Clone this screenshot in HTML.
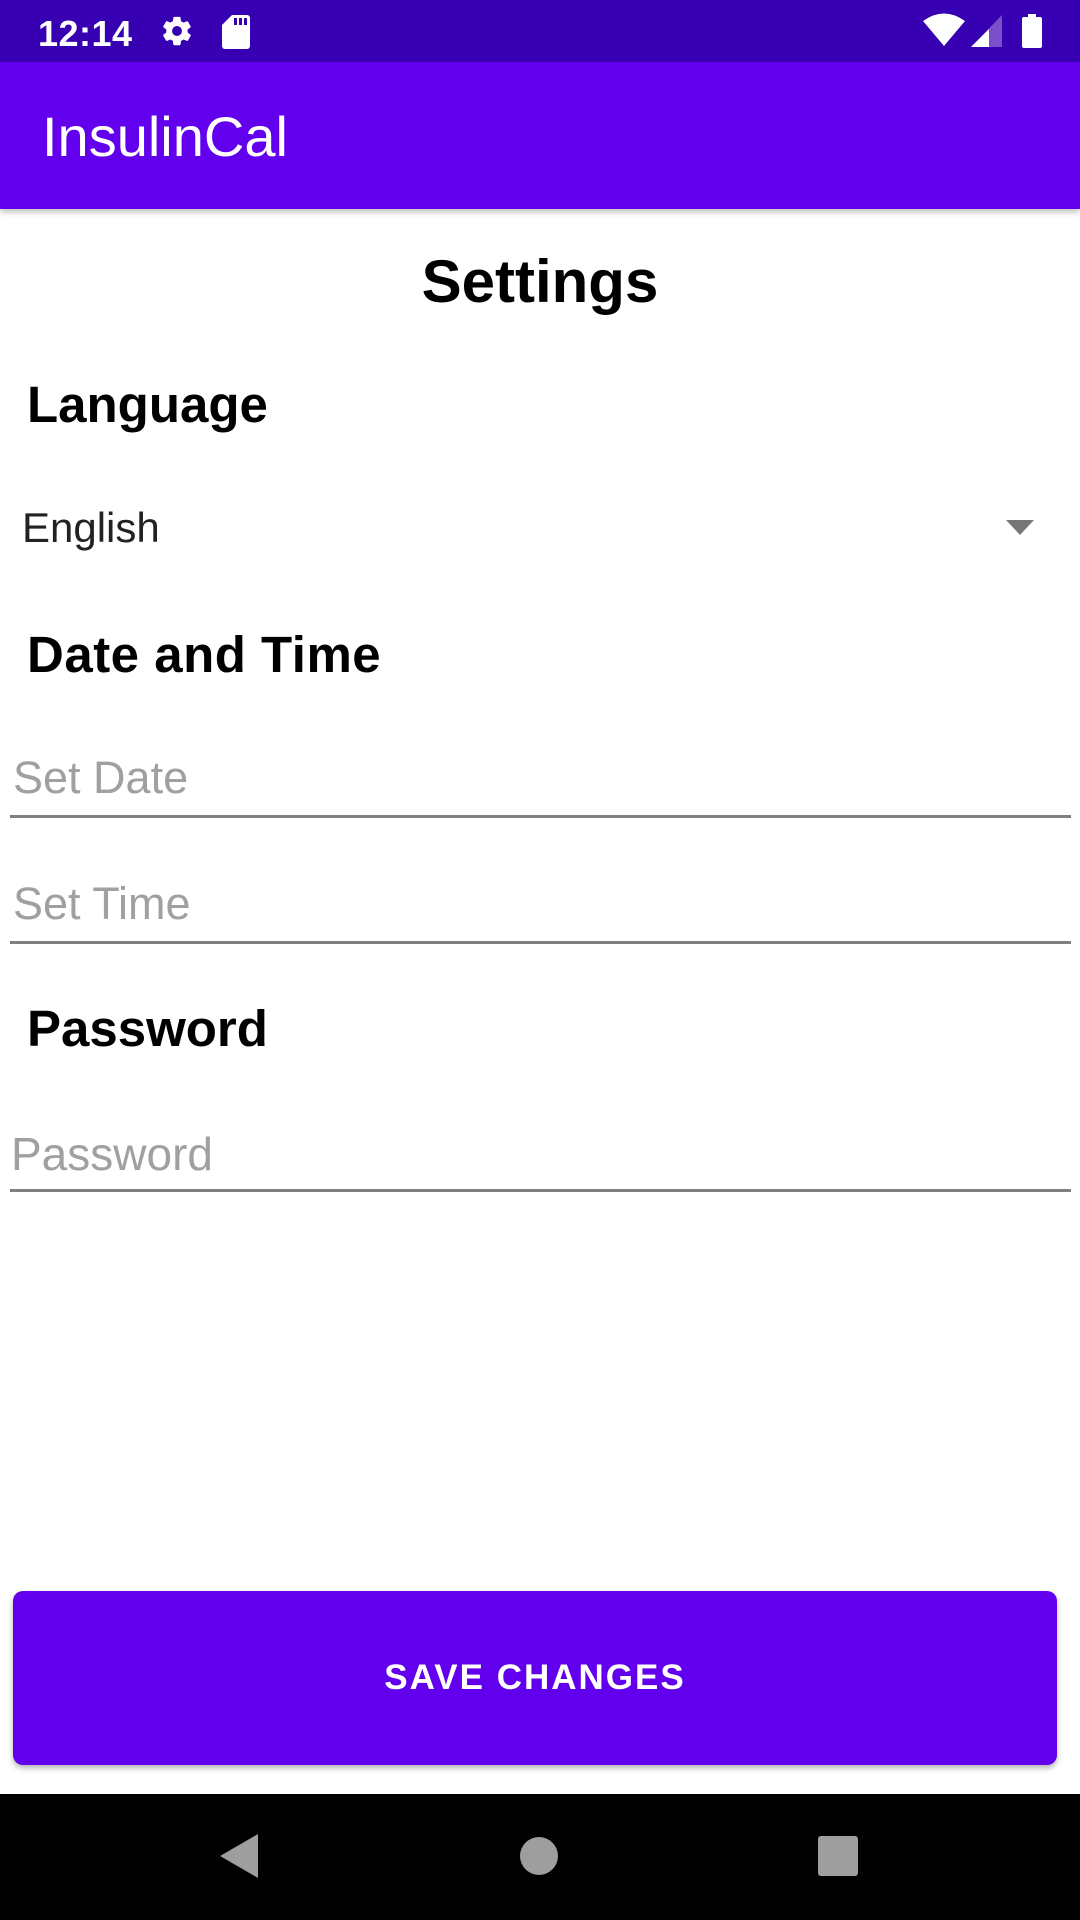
<!DOCTYPE html>
<html><head><meta charset="utf-8"><style>
*{margin:0;padding:0;box-sizing:border-box}
body{width:1080px;height:1920px;position:relative;background:#fff;font-family:"Liberation Sans",Roboto,sans-serif;overflow:hidden}
.abs{position:absolute;white-space:nowrap}
.h{font-weight:bold;font-size:51px;color:#000;left:27px}
.ph{font-size:45px;color:#a0a0a0}
.line{position:absolute;left:10px;width:1061px;height:3px;background:#808080}
</style></head><body>
<div class="abs" style="left:0;top:0;width:1080px;height:62px;background:#3700B3"></div>
<div class="abs" style="left:38px;top:13px;font-size:36px;color:#fff;font-weight:bold;letter-spacing:0.5px">12:14</div>
<svg class="abs" style="left:160px;top:14px" width="34" height="34" viewBox="0 0 24 24"><path fill="#fff" d="M19.4 13c.04-.3.1-.7.1-1s-.03-.7-.07-1l2.1-1.6c.2-.15.24-.42.12-.64l-2-3.46c-.12-.22-.4-.3-.6-.22l-2.5 1c-.5-.4-1.1-.7-1.7-1l-.4-2.65A.5.5 0 0 0 14 2h-4a.5.5 0 0 0-.5.42l-.4 2.650c-.6.25-1.2.58-1.7.98l-2.5-1c-.22-.08-.48 0-.6.22l-2 3.46c-.13.22-.07.5.12.64L4.5 11c-.04.3-.07.7-.07 1s.03.7.07 1l-2.1 1.650c-.2.15-.25.42-.13.64l2 3.460c.12.22.4.3.6.22l2.5-1c.5.4 1.1.7 1.7 1l.4 2.65c.03.24.24.42.5.42h4c.25 0 .46-.18.5-.42l.4-2.65c.6-.25 1.2-.58 1.7-.98l2.5 1c.22.08.48 0 .6-.22l2-3.46c.12-.22.07-.5-.12-.64L19.4 13zM12 15.5a3.5 3.5 0 1 1 0-7 3.5 3.5 0 0 1 0 7z"/></svg>
<svg class="abs" style="left:222px;top:15px" width="28" height="34" viewBox="0 0 28 34"><path fill="#fff" d="M10 0h15a3 3 0 0 1 3 3v28a3 3 0 0 1-3 3H3a3 3 0 0 1-3-3V10z"/><rect x="12" y="3" width="3" height="7" fill="#3700B3"/><rect x="17" y="3" width="3" height="7" fill="#3700B3"/><rect x="22" y="3" width="3" height="7" fill="#3700B3"/></svg>
<svg class="abs" style="left:923px;top:13px" width="42" height="34" viewBox="0 0 42 34"><path fill="#fff" d="M0 8Q21-7 42 8L21 33z"/></svg>
<svg class="abs" style="left:971px;top:15px" width="32" height="32" viewBox="0 0 32 32"><path fill="#7a4fc9" d="M31 0V32H0z"/><path fill="#fff" d="M18 14V32H0z"/></svg>
<svg class="abs" style="left:1022px;top:14px" width="20" height="34" viewBox="0 0 20 34"><rect x="6" y="0" width="8" height="4" fill="#fff"/><rect x="0" y="3" width="20" height="31" rx="2" fill="#fff"/></svg>
<div class="abs" style="left:0;top:62px;width:1080px;height:147px;background:#6200EE;box-shadow:0 3px 6px rgba(0,0,0,.25)"></div>
<div class="abs" style="left:42px;top:104px;font-size:56px;color:#fff">InsulinCal</div>
<div class="abs" style="left:0;width:1080px;text-align:center;top:247px;font-size:60px;font-weight:bold">Settings</div>
<div class="abs h" style="top:375px">Language</div>
<div class="abs" style="left:22px;top:504px;font-size:42px;color:#222">English</div>
<svg class="abs" style="left:1006px;top:520px" width="28" height="15" viewBox="0 0 28 15"><path fill="#777" d="M0 0H28L14 15z"/></svg>
<div class="abs h" style="top:625px;letter-spacing:0.5px">Date and Time</div>
<div class="abs ph" style="left:13px;top:752px">Set Date</div>
<div class="line" style="top:815px"></div>
<div class="abs ph" style="left:13px;top:878px">Set Time</div>
<div class="line" style="top:941px"></div>
<div class="abs h" style="top:999px">Password</div>
<div class="abs ph" style="left:11px;top:1127px;font-size:46px">Password</div>
<div class="line" style="top:1189px"></div>
<div class="abs" style="left:13px;top:1591px;width:1044px;height:174px;background:#6200EE;border-radius:10px;box-shadow:0 3px 6px rgba(0,0,0,.3);color:#fff;font-size:35px;font-weight:bold;letter-spacing:2px;text-align:center;line-height:174px">SAVE CHANGES</div>
<div class="abs" style="left:0;top:1794px;width:1080px;height:126px;background:#000"></div>
<svg class="abs" style="left:218px;top:1834px" width="42" height="44" viewBox="0 0 42 44"><path fill="#9e9e9e" d="M40 0V44L2 22z"/></svg>
<div class="abs" style="left:520px;top:1837px;width:38px;height:38px;border-radius:50%;background:#9e9e9e"></div>
<div class="abs" style="left:818px;top:1836px;width:40px;height:40px;border-radius:3px;background:#9e9e9e"></div>
</body></html>
